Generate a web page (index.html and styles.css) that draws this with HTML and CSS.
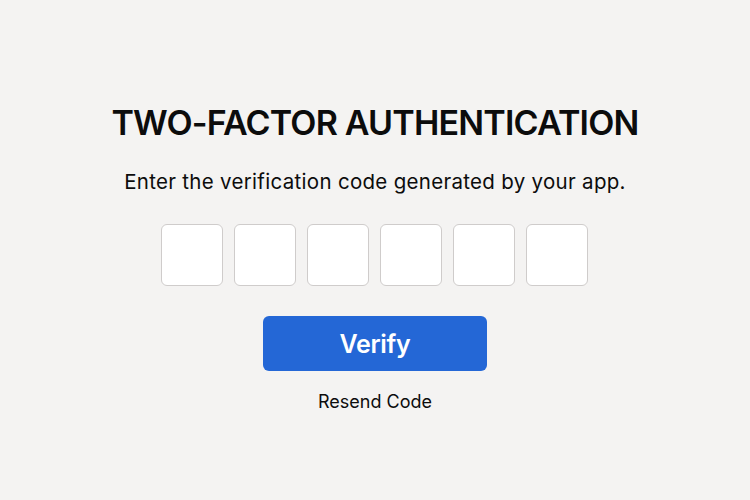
FILE: index.html
```html
<!DOCTYPE html>
<html>
<head>
<meta charset="utf-8">
<link rel="stylesheet" href="styles.css">
</head>
<body>
<main class="card">
  <h1 class="title">TWO-FACTOR AUTHENTICATION</h1>
  <p class="subtitle">Enter the verification code generated by your app.</p>
  <div class="code">
    <input class="digit" type="text" maxlength="1">
    <input class="digit" type="text" maxlength="1">
    <input class="digit" type="text" maxlength="1">
    <input class="digit" type="text" maxlength="1">
    <input class="digit" type="text" maxlength="1">
    <input class="digit" type="text" maxlength="1">
  </div>
  <button class="verify">Verify</button>
  <a class="resend">Resend Code</a>
</main>
</body>
</html>
```
FILE: styles.css
```css
html, body {
  margin: 0;
  padding: 0;
  background: #f4f3f2;
  font-family: Inter, "Liberation Sans", sans-serif;
  color: #0c0c0c;
}
.card {
  width: 750px;
  height: 500px;
  display: flex;
  flex-direction: column;
  align-items: center;
  padding-top: 103px;
  box-sizing: border-box;
}
.title {
  margin: 0;
  font-size: 34px;
  font-weight: 600;
  line-height: 40px;
  letter-spacing: -0.8px;
}
.subtitle {
  margin: 27px 0 0;
  font-size: 20.5px;
  line-height: 24px;
  font-weight: 400;
  letter-spacing: 0.3px;
}
.code {
  display: flex;
  gap: 11px;
  margin-top: 30px;
  margin-right: 1px;
}
.digit {
  width: 62px;
  height: 62px;
  box-sizing: border-box;
  border: 1px solid #cfcccb;
  border-radius: 6px;
  background: #fff;
  margin: 0;
  padding: 0;
}
.verify {
  margin-top: 30px;
  width: 224px;
  height: 55px;
  border: none;
  border-radius: 6px;
  background: #2467d6;
  color: #fff;
  font-family: inherit;
  font-size: 25px;
  font-weight: 600;
  letter-spacing: -0.3px;
}
.resend {
  margin-top: 20px;
  font-size: 18px;
  line-height: 22px;
  color: #0c0c0c;
}
```
